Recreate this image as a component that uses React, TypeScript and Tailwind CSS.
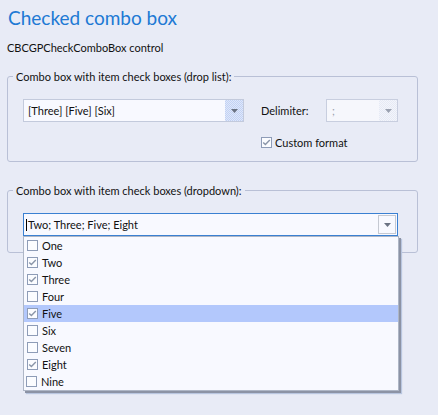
import React from "react";

const Arrow = ({ color = "#6b7383" }: { color?: string }) => (
  <svg width="7" height="4" viewBox="0 0 7 4">
    <path d="M0 0H7L3.5 4Z" fill={color} />
  </svg>
);

const Check = ({ checked }: { checked: boolean }) => (
  <span className="w-[11px] h-[11px] border border-[#8e9cb7] bg-[#fbfcff] flex items-center justify-center shrink-0">
    {checked && (
      <svg width="9" height="9" viewBox="0 0 9 9">
        <path d="M1.2 4.4L3.4 6.6L7.8 2" stroke="#8b96a9" strokeWidth="1.4" fill="none" />
      </svg>
    )}
  </span>
);

const items: [string, boolean][] = [
  ["One", false],
  ["Two", true],
  ["Three", true],
  ["Four", false],
  ["Five", true],
  ["Six", false],
  ["Seven", false],
  ["Eight", true],
  ["Nine", false],
];

export default function App() {
  return (
    <div className="w-[438px] h-[415px] bg-[#e8ebf6] pl-[7px] pt-[6px] text-[11px] leading-[13px] text-[#111] font-[family-name:Lato,sans-serif] overflow-hidden">
      <div className="text-[19px] leading-[24px] text-[#2079d4] pl-px">
        Checked combo box
      </div>
      <div className="mt-[11px]">CBCGPCheckComboBox control</div>

      {/* Group 1 */}
      <div className="mt-[22px] w-[411px] h-[86px] border border-[#b9c0d6] rounded-[3px] relative pt-[22px] pl-[15px]">
        <div className="absolute left-[5px] -top-[7px] px-[3px] bg-[#e8ebf6]">
          Combo box with item check boxes (drop list):
        </div>
        <div className="flex items-center">
          <div className="w-[221px] h-[23px] border border-[#c3cadc] bg-[#f8f9ff] flex items-stretch">
            <div className="flex-1 flex items-center pl-[4px]">[Three] [Five] [Six]</div>
            <div className="w-[18px] flex items-center justify-center bg-[repeating-conic-gradient(#c2d2f3_0_25%,#dfe7fb_0_50%)] bg-[length:2px_2px]">
              <Arrow />
            </div>
          </div>
          <div className="w-[65px] ml-[17px]">Delimiter:</div>
          <div className="w-[72px] h-[23px] border border-[#c8cedf] bg-[#f6f7fc] flex items-stretch">
            <div className="flex-1 flex items-center pl-[5px] text-[#9aa0ad]">;</div>
            <div className="w-[18px] flex items-center justify-center bg-[repeating-conic-gradient(#e6eaf5_0_25%,#f3f5fb_0_50%)] bg-[length:2px_2px]">
              <Arrow color="#9aa1b0" />
            </div>
          </div>
        </div>
        <div className="mt-[14px] ml-[238px] flex items-center gap-[3px]">
          <Check checked />
          <span>Custom format</span>
        </div>
      </div>

      {/* Group 2 */}
      <div className="mt-[28px] w-[411px] h-[63px] border border-[#b9c0d6] rounded-[3px] relative pt-[22px] pl-[15px]">
        <div className="absolute left-[5px] -top-[7px] px-[3px] bg-[#e8ebf6]">
          Combo box with item check boxes (dropdown):
        </div>
        <div className="relative w-[375px] h-[23px] border border-[#3a80d2] bg-[#f8f9ff] flex items-stretch">
          <div className="flex-1 flex items-center pl-[2px]">
            <span className="w-px h-[12px] bg-black mr-[1px]" />
            <span>Two; Three; Five; Eight</span>
          </div>
          <div className="w-[18px] my-px mr-px border border-[#c5c9d2] flex items-center justify-center">
            <Arrow />
          </div>
          <div className="absolute left-[-1px] top-[22px] w-[376px] h-[155px] border border-[#aeb6c6] bg-[#f8f9ff] shadow-[2px_2px_0_#8c93a5,3px_3px_1px_#b9c6e0] z-10">
            {items.map(([label, checked], i) => (
              <div
                key={label}
                className={`h-[17px] flex items-center gap-[4px] ${i === 8 ? "pl-[2px]" : "pl-[3px]"} ${label === "Five" ? "bg-[#b3c8fc]" : ""}`}
              >
                <Check checked={checked} />
                <span>{label}</span>
              </div>
            ))}
          </div>
        </div>
      </div>
    </div>
  );
}
